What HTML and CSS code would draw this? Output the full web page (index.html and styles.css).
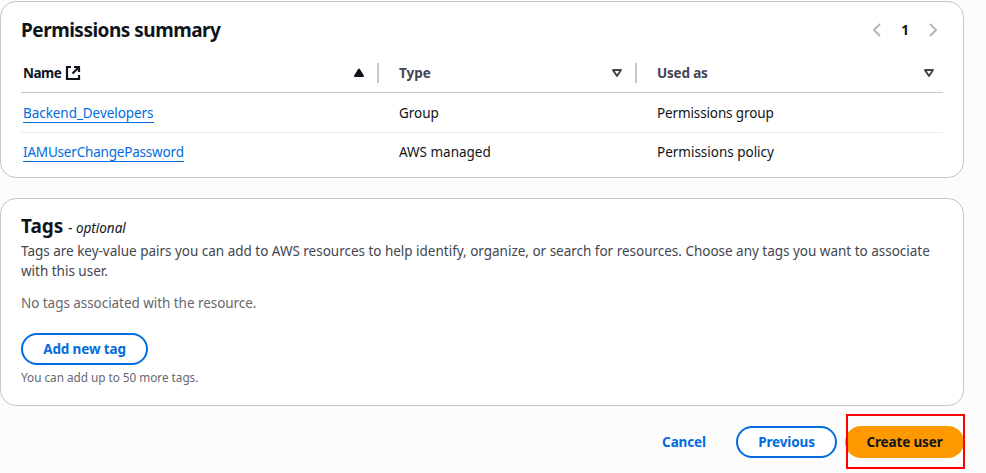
FILE: index.html
```html
<!DOCTYPE html>
<html lang="en">
<head>
<meta charset="utf-8">
<title>Create user</title>
<link rel="stylesheet" href="styles.css">
</head>
<body>
<main class="page">
  <section class="card permissions">
    <header class="card-header">
      <h2 class="title"><span class="t-perm">Permissions summary</span></h2>
      <nav class="pager">
        <svg class="chevron" viewBox="0 0 16 16"><path d="M11 2 5 8l6 6"/></svg>
        <span class="page-number">1</span>
        <svg class="chevron" viewBox="0 0 16 16"><path d="m5 2 6 6-6 6"/></svg>
      </nav>
    </header>
    <div class="grid head">
      <div class="cell sorted"><span class="t-name">Name</span>
        <svg class="external" viewBox="0 0 16 16"><path d="M6 2H2v12h12V10M9 2h5v5M14 2 7.500 8.500"/></svg>
        <svg class="sort filled" viewBox="0 0 12 10"><path d="M6 1.500 10 8H2Z"/></svg>
      </div>
      <div class="cell"><span class="t-type">Type</span>
        <svg class="sort" viewBox="0 0 12 10"><path d="M2 2h8L6 8Z"/></svg>
      </div>
      <div class="cell"><span class="t-used">Used as</span>
        <svg class="sort" viewBox="0 0 12 10"><path d="M2 2h8L6 8Z"/></svg>
      </div>
    </div>
    <div class="grid row">
      <div class="cell"><a class="link t-backend">Backend_Developers</a></div>
      <div class="cell"><span class="t-group">Group</span></div>
      <div class="cell"><span class="t-pgroup">Permissions group</span></div>
    </div>
    <div class="grid row">
      <div class="cell"><a class="link t-iam">IAMUserChangePassword</a></div>
      <div class="cell"><span class="t-aws">AWS managed</span></div>
      <div class="cell"><span class="t-policy">Permissions policy</span></div>
    </div>
  </section>

  <section class="card tags">
    <h2 class="title"><span class="t-tags">Tags</span> <span class="optional">- optional</span></h2>
    <p class="description"><span class="t-desc">Tags are key-value pairs you can add to AWS resources to help identify, organize, or search for resources. Choose any tags you want to associate</span><br><span class="t-desc2">with this user.</span></p>
    <p class="empty"><span class="t-empty">No tags associated with the resource.</span></p>
    <button class="button add"><span class="t-add">Add new tag</span></button>
    <p class="hint"><span class="t-hint">You can add up to 50 more tags.</span></p>
  </section>

  <footer class="actions">
    <button class="button cancel"><span class="t-cancel">Cancel</span></button>
    <button class="button previous"><span class="t-prev">Previous</span></button>
    <div class="create-wrap">
      <button class="button create"><span class="t-create">Create user</span></button>
      <div class="highlight"></div>
    </div>
  </footer>
</main>
</body>
</html>
```
FILE: styles.css
```css
* { box-sizing: border-box; }
body {
  margin: 0;
  height: 473px;
  overflow: hidden;
  background: #fcfcfd;
  color: #0f141a;
  font: 13.5px/20px "Noto Sans", "Open Sans", sans-serif;
  letter-spacing: -0.015px;
  white-space: nowrap;
}
.page { width: 964px; padding-top: 1px; }
.card {
  background: #fff;
  border: 1px solid #c6c6cd;
  border-radius: 16px;
  padding: 0 20px;
}
.permissions { height: 177px; }
.card-header { display: flex; align-items: center; justify-content: space-between; height: 52px; padding-top: 4px; }
.title { margin: 0; font-size: 19px; line-height: 24px; font-weight: 700; }
.t-perm { letter-spacing: -0.5px; }
.pager { display: flex; align-items: center; gap: 12px; padding: 0 2px 0 0; }
.page-number { width: 16px; text-align: center; font-weight: 700; }
.chevron { width: 16px; height: 16px; fill: none; stroke: #b4b4bb; stroke-width: 2; }
.grid { display: grid; grid-template-columns: 357px 258px 307px; }
.cell { display: flex; align-items: center; padding-left: 21px; }
.cell:first-child { padding-left: 2px; }
.head { height: 39px; border-bottom: 1px solid #c6c6cd; font-weight: 700; color: #424650; }
.head .cell { height: 20px; margin-top: 9px; padding-right: 8px; }
.head .cell:not(:first-child) { padding-left: 20px; border-left: 2px solid #c6c6cd; margin-left: -1px; }
.head .sorted { color: #0f141a; padding-right: 13px; }
.head .cell:nth-child(2) { padding-right: 13px; }
.t-name { letter-spacing: -0.48px; }
.t-used { letter-spacing: -0.18px; }
.t-iam { letter-spacing: -0.19px; }
.t-backend { letter-spacing: -0.06px; }
.t-pgroup { letter-spacing: -0.13px; }
.external { width: 16px; height: 16px; margin-left: 4px; fill: none; stroke: currentColor; stroke-width: 2.2; }
.sort { width: 12px; height: 10px; margin-left: auto; fill: none; stroke: currentColor; stroke-width: 2; stroke-linejoin: round; }
.filled { fill: currentColor; }
.row { height: 39px; padding-top: 1px; }
.row + .row { padding-top: 0; border-top: 1px solid #ebebf0; }
.link { color: #006ce0; border-bottom: 1px solid #006ce0; line-height: 18px; }
.tags { height: 208px; margin-top: 20px; padding-top: 15px; }
.optional { font-size: 13.5px; font-weight: 400; font-style: italic; }
.tags p { margin: 0; }
.tags .description { padding-top: 1px; color: #424650; }
.tags .empty { margin-top: 12px; color: #656871; letter-spacing: -0.05px; }
.button {
  display: flex; align-items: center; justify-content: center;
  height: 32px; padding: 0; border: 2px solid #006ce0; border-radius: 16px;
  background: #fff; color: #006ce0; font: 700 13.5px/20px "Noto Sans", sans-serif;
  letter-spacing: -0.13px;
}
.add { width: 127px; margin-top: 20px; }
.tags .hint { padding-top: 4px; font-size: 11.75px; line-height: 16px; color: #656871; }
.actions { display: flex; justify-content: flex-end; margin-top: 20px; }
.cancel { width: 84px; margin-right: 10px; border-color: transparent; background: none; }
.previous { width: 101px; margin-right: 8px; }
.create-wrap { position: relative; width: 119px; }
.create { width: 119px; border-color: #ff9900; background: #ff9900; color: #0f141a; }
.highlight { position: absolute; left: 1px; top: -12px; width: 119px; height: 55px; border: 2px solid #ff0000; }
```
